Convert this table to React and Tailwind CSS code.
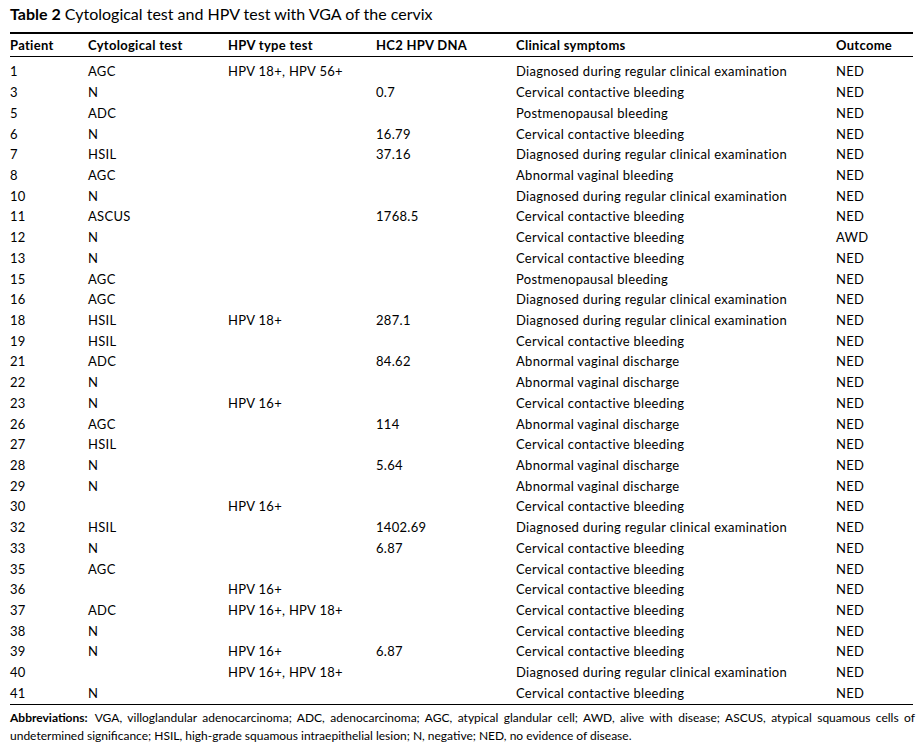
const rows = [
    ['1', 'AGC', 'HPV 18+, HPV 56+', '', 'Diagnosed during regular clinical examination', 'NED'],
    ['3', 'N', '', '0.7', 'Cervical contactive bleeding', 'NED'],
    ['5', 'ADC', '', '', 'Postmenopausal bleeding', 'NED'],
    ['6', 'N', '', '16.79', 'Cervical contactive bleeding', 'NED'],
    ['7', 'HSIL', '', '37.16', 'Diagnosed during regular clinical examination', 'NED'],
    ['8', 'AGC', '', '', 'Abnormal vaginal bleeding', 'NED'],
    ['10', 'N', '', '', 'Diagnosed during regular clinical examination', 'NED'],
    ['11', 'ASCUS', '', '1768.5', 'Cervical contactive bleeding', 'NED'],
    ['12', 'N', '', '', 'Cervical contactive bleeding', 'AWD'],
    ['13', 'N', '', '', 'Cervical contactive bleeding', 'NED'],
    ['15', 'AGC', '', '', 'Postmenopausal bleeding', 'NED'],
    ['16', 'AGC', '', '', 'Diagnosed during regular clinical examination', 'NED'],
    ['18', 'HSIL', 'HPV 18+', '287.1', 'Diagnosed during regular clinical examination', 'NED'],
    ['19', 'HSIL', '', '', 'Cervical contactive bleeding', 'NED'],
    ['21', 'ADC', '', '84.62', 'Abnormal vaginal discharge', 'NED'],
    ['22', 'N', '', '', 'Abnormal vaginal discharge', 'NED'],
    ['23', 'N', 'HPV 16+', '', 'Cervical contactive bleeding', 'NED'],
    ['26', 'AGC', '', '114', 'Abnormal vaginal discharge', 'NED'],
    ['27', 'HSIL', '', '', 'Cervical contactive bleeding', 'NED'],
    ['28', 'N', '', '5.64', 'Abnormal vaginal discharge', 'NED'],
    ['29', 'N', '', '', 'Abnormal vaginal discharge', 'NED'],
    ['30', '', 'HPV 16+', '', 'Cervical contactive bleeding', 'NED'],
    ['32', 'HSIL', '', '1402.69', 'Diagnosed during regular clinical examination', 'NED'],
    ['33', 'N', '', '6.87', 'Cervical contactive bleeding', 'NED'],
    ['35', 'AGC', '', '', 'Cervical contactive bleeding', 'NED'],
    ['36', '', 'HPV 16+', '', 'Cervical contactive bleeding', 'NED'],
    ['37', 'ADC', 'HPV 16+, HPV 18+', '', 'Cervical contactive bleeding', 'NED'],
    ['38', 'N', '', '', 'Cervical contactive bleeding', 'NED'],
    ['39', 'N', 'HPV 16+', '6.87', 'Cervical contactive bleeding', 'NED'],
    ['40', '', 'HPV 16+, HPV 18+', '', 'Diagnosed during regular clinical examination', 'NED'],
    ['41', 'N', '', '', 'Cervical contactive bleeding', 'NED'],
];

const headers = ['Patient', 'Cytological test', 'HPV type test', 'HC2 HPV DNA', 'Clinical symptoms', 'Outcome'];

// column widths follow the reference: 10 / 88 / 228 / 376 / 516 / 836
const widths = ['w-[78px]', 'w-[140px]', 'w-[148px]', 'w-[140px]', 'w-[320px]', 'w-[77px]'];

function App() {
    return (
        <div className="w-[921px] h-[749px] bg-white pl-[10px] text-black font-['Lato','Liberation_Sans',sans-serif]">
            <p className="h-[32px] pt-[5px] text-[16px] leading-[18px]">
                <b>Table 2</b> Cytological test and HPV test with VGA of the cervix
            </p>

            <table className="w-[903px] table-fixed border-collapse text-[13px] tracking-[0.3px] border-t-2 border-black">
                <thead>
                    <tr className="h-[23px] border-b border-black">
                        {headers.map((h, i) => (
                            <th key={h} className={`${widths[i]} p-0 pt-[2px] text-left font-bold align-middle`}>
                                {h}
                            </th>
                        ))}
                    </tr>
                </thead>
                <tbody className="border-b border-black">
                    <tr className="h-[3px]">
                        <td colSpan={6} className="p-0" />
                    </tr>
                    {rows.map((row, id) => (
                        <tr key={id} className="h-[20.73px]">
                            {row.map((cell, i) => (
                                <td key={i} className="p-0 pt-[4px] leading-[16px] align-middle whitespace-nowrap">
                                    {cell}
                                </td>
                            ))}
                        </tr>
                    ))}
                    <tr className="h-[3px]">
                        <td colSpan={6} className="p-0" />
                    </tr>
                </tbody>
            </table>

            <p className="w-[905px] pt-[4px] text-[12px] leading-[18px] text-justify">
                <b className="mr-[2px]">Abbreviations:</b> VGA, villoglandular adenocarcinoma; ADC, adenocarcinoma; AGC, atypical
                glandular cell; AWD, alive with disease; ASCUS, atypical squamous cells of undetermined
                significance; HSIL, high-grade squamous intraepithelial lesion; N, negative; NED, no evidence of
                disease.
            </p>
        </div>
    );
}

export default App;
